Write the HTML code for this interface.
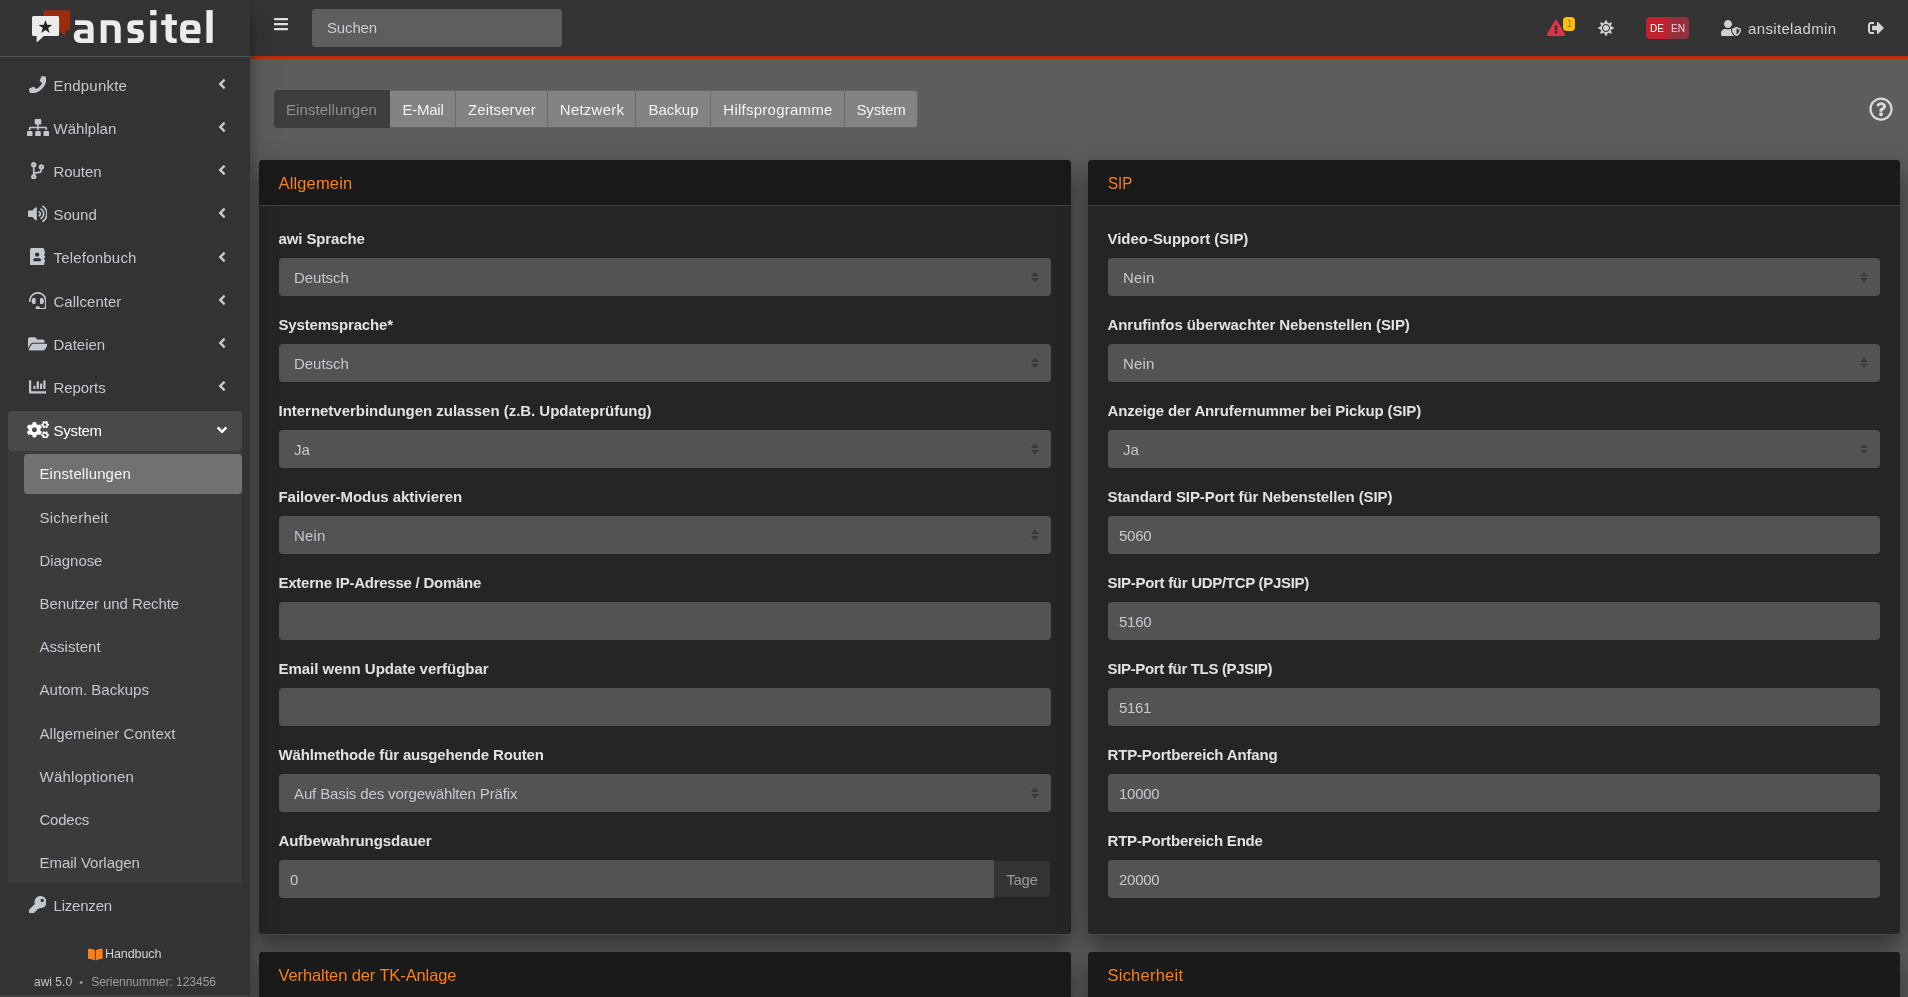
<!DOCTYPE html>
<html lang="de"><head><meta charset="utf-8"><title>ansitel awi - Einstellungen</title>
<style>
*{box-sizing:border-box;margin:0;padding:0}
html,body{width:1908px;height:997px;overflow:hidden}
body{position:relative;background:#5d5d5d;font-family:"Liberation Sans",sans-serif;font-size:15px;line-height:25px;color:#fff;-webkit-font-smoothing:antialiased}
.tx{white-space:nowrap;display:inline-block}
svg.ic{display:block;fill:currentColor}
#sb,#hd,#ct{will-change:transform}

/* ---------- sidebar ---------- */
#sb{position:absolute;left:0;top:0;width:250px;height:997px;background:#333;z-index:30;box-shadow:0 14px 28px rgba(0,0,0,.25),0 10px 10px rgba(0,0,0,.22)}
.brand{position:absolute;left:0;top:0;width:250px;height:57px;border-bottom:1px solid #4b545c}
.logo{position:absolute;left:0;top:0}
.nl{position:absolute;left:8px;width:234px;height:40px;border-radius:4px;color:#c2c7d0}
.nl.act{background:#494949;color:#fff}
.ni{position:absolute;left:16.8px;width:25.6px;height:17.6px;display:flex;justify-content:center}
.nt{position:absolute;left:45.5px;top:8px}
.ang{position:absolute;right:16px;top:11.200px;width:8px;height:16px}
.ang.down{transform:rotate(-90deg)}
.tv{position:absolute;left:8px;width:234px;background:#3b3b3b}
.sl{position:absolute;left:24px;width:218px;height:40px;border-radius:4px;color:#c2c7d0}
.sl.act{background:#717171;color:#f4f4f4}
.st{position:absolute;left:15.500px;top:8px}
.hb{position:absolute;left:0;top:942px;width:250px;height:25px;color:#d0d0d0;font-size:12.600px}
.hb svg{position:absolute;left:88.300px;top:5.700px}
.hbt{position:absolute;left:105px;top:0}
.ver{position:absolute;left:0;top:970px;width:250px;height:24px;font-size:12px}
.v1{position:absolute;left:34px;top:0;color:#c4c4c4}
.dot{position:absolute;left:79.300px;top:0;color:#9a9a9a;font-size:11px}
.v2{position:absolute;left:91.200px;top:0;color:#9c9c9c}

/* ---------- header ---------- */
#hd{position:absolute;left:250px;top:0;width:1658px;height:59px;background:#343434;border-bottom:3px solid #b0320c;z-index:20;color:#d2d2d2}
#hd>div{position:absolute}
.burger{left:24px;top:16px;color:#dedede}
.search{left:62px;top:9px;width:250px;height:38px;background:#5e5e5e;border-radius:4px;color:#c9cdd3;padding:6px 0 0 15px}
.warn{left:1296.500px;top:20px}
.badge1{left:1313px;top:17px;width:12px;height:14px;border-radius:4px;background:#ffc107;color:#1f2d3d;font-size:9px;line-height:14px;text-align:center}
.sun{left:1348px;top:20px;color:#d0d0d0}
.lang{left:1396px;top:17px;width:43px;height:22px;border-radius:4px;overflow:hidden;font-size:11.500px;line-height:22px}
.lang .de{position:absolute;left:0;top:0;width:22px;height:22px;background:#c2202f;color:#fff;text-align:center}
.lang .en{position:absolute;left:22px;top:0;width:21px;height:22px;background:#96303e;color:#e9cfd3;text-align:center;padding-right:2px}
.user{left:1470.900px;top:20px;color:#d0d0d0}
.uname{left:1498px;top:16px;color:#d2d2d2}
.logout{left:1617.700px;top:20px;color:#d6d6d6}

/* ---------- content ---------- */
#ct{position:absolute;left:0;top:0;width:1908px;height:997px;z-index:1}
#tabs{position:absolute;left:274px;top:90px;width:644px;height:38px}
.tab{position:absolute;top:0;height:38px;background:#838383;border:solid #646464;border-width:1px 0;border-right:1px solid #6b6b6b;color:#f3f3f3;text-align:center;padding-top:6px;padding-left:1px}
.tab.on{background:#3e3e3e;border-color:#3e3e3e;color:#8f8f8f;padding-left:0}
.tab.first{border-radius:4px 0 0 4px}
.tab.last{border-radius:0 4px 4px 0;border-right-color:#646464;padding-left:0}
.help{position:absolute;left:1868.800px;top:97.200px;color:#dbdbdb}

.card{position:absolute;width:812px;background:#252525;border-radius:4px;box-shadow:0 10px 24px rgba(0,0,0,.5)}
.card.r1{border-bottom:1px solid #4a4a4a}
.ch{height:46px;background:#1a1a1a;border-bottom:1px solid #39414a;border-radius:4px 4px 0 0;position:relative}
.ct{position:absolute;left:19.500px;top:10.500px;font-size:16.500px;color:#f9801a}
.cb{padding:20px}
.fg{height:70px;margin-bottom:16px}
.lb{height:24px;margin-bottom:8px;font-weight:700;color:#e2e2e2;padding-top:0}
.lb .tx{position:relative;left:-0.500px}
.inp{position:relative;height:38px;background:#535353;border-radius:4px;color:#c4c8d0;padding-top:7px}
.inp.sel{padding-left:15px}
.inp.txt{padding-left:11px}
.arr{position:absolute;right:12.500px;top:14px}
.ig{display:flex}
.inp.grp{width:715px;border-radius:4px 0 0 4px}
.addon{width:56px;height:36px;margin-top:1px;background:#343434;border-radius:0 4px 4px 0;color:#9a9a9a;text-align:center;padding-top:6px}

.sbend{position:absolute;left:0;top:995px;width:250px;height:2px;background:#404040}

</style></head>
<body>
<div id="sb">
<div class="brand"><svg class="logo" width="250" height="56" viewBox="0 0 250 56">
<path d="M44.600 10.200H68.800Q70.100 10.200 70.100 11.500V28.800Q70.100 30.100 68.800 30.100H65.600V35.300L64.900 35.900 59.100 30.100H44.600Q43.300 30.100 43.300 28.800V11.500Q43.300 10.200 44.600 10.200z" fill="#9c2d0c"/>
<path d="M33.500 15.900H57.600Q59.100 15.900 59.100 17.400V34.600Q59.100 36.100 57.600 36.100H43.900L37.400 42.100 36.600 41.700V36.100H33.500Q32 36.100 32 34.600V17.400Q32 15.900 33.500 15.900z" fill="#ebebeb"/>
<path d="M45.45 19.90L47.10 24.83L52.30 24.88L48.11 27.97L49.68 32.92L45.45 29.90L41.22 32.92L42.79 27.97L38.60 24.88L43.80 24.83z" fill="#232323"/>
<g fill="#ececec" fill-rule="evenodd">
<path d="M75.1 20.3h11q7.500 0 7.500 7.500v15.100h-13.300q-6.500 0-6.500-6.500v-.4q0-6.500 6.500-6.500h7.400v-1.700q0-2.800-2.800-2.800h-9.800zM87.700 33.600h-5.300q-2.600 0-2.600 2.400t2.600 2.400h5.300z"/>
<path d="M100.700 20.300h12.500q7.500 0 7.500 7.500v15.100h-5.900v-14.600q0-3.100-3.100-3.100h-5.100v17.700h-5.900z"/>
<path d="M143.100 20.300v4.700h-8q-1.900 0-1.900 1.900 0 1.700 1.900 1.900l4 .5q4.800.6 4.800 6.200v1.200q0 6.200-6.200 6.200h-9.900v-4.700h8.200q1.900 0 1.900-1.900v-.3q0-1.600-1.900-1.800l-4-.5q-4.700-.6-4.700-6.200v-1q0-6.200 6.200-6.200z"/>
<path d="M150.200 10.100h6.300v5.100h-6.300zM150.200 20.300h6.300v22.600h-6.300z"/>
<path d="M165.500 14.300h6.300v6h5.100v4.700h-5.100v10.500q0 2.900 2.900 2.900h2v4.500h-4.200q-7 0-7-7v-10.900h-4.300v-4.700h4.300z"/>
<path d="M187.600 20.300h5.400q7.500 0 7.500 7.500v6.300h-14.300v1.700q0 2.400 2.600 2.400h10.700v4.700h-12.400q-7 0-7-7v-8.100q0-7.500 7.500-7.500zM186.200 29.700h8.200v-2q0-2.700-2.700-2.700h-2.800q-2.700 0-2.700 2.700z"/>
<path d="M206.400 10.100h6.300v32.800h-6.300z"/>
</g>
</svg></div>
<div class="nl" style="top:65px"><span class="ni" style="top:10.6px"><svg class="ic" viewBox="0 0 512 512" width="17.60" height="17.60" style=""><path d="M493.4 24.6l-104-24c-11.3-2.600-22.900 3.300-27.500 13.900l-48 112c-4.200 9.800-1.400 21.300 6.900 28l60.600 49.600c-36 76.700-98.900 140.500-177.200 177.200l-49.600-60.600c-6.800-8.300-18.200-11.100-28-6.900l-112 48C3.900 366.500-2 378.100.6 389.400l24 104C27.100 504.200 36.700 512 48 512c256.100 0 464-207.500 464-464 0-11.200-7.700-20.900-18.600-23.400z"/></svg></span><span id="t1" class="tx nt" style="letter-spacing:0.202px;top:8px;">Endpunkte</span><span class="ang" style="top:11px"><svg class="ic" viewBox="0 0 256 512" width="8.00" height="16.00" style=""><path d="M31.700 239l136-136c9.400-9.400 24.600-9.400 33.900 0l22.600 22.600c9.400 9.400 9.400 24.600 0 33.900L127.900 256l96.400 96.400c9.400 9.400 9.400 24.600 0 33.900L201.700 409c-9.400 9.400-24.600 9.400-33.900 0l-136-136c-9.500-9.400-9.500-24.600-.1-34z"/></svg></span></div>
<div class="nl" style="top:108px"><span class="ni" style="top:10.6px"><svg class="ic" viewBox="0 0 640 512" width="22.00" height="17.60" style=""><path d="M128 352H32c-17.670 0-32 14.330-32 32v96c0 17.670 14.330 32 32 32h96c17.670 0 32-14.330 32-32v-96c0-17.670-14.330-32-32-32zm-24-80h192v48h48v-48h192v48h48v-57.590c0-21.170-17.230-38.410-38.410-38.410H344v-64h40c17.670 0 32-14.330 32-32V32c0-17.670-14.330-32-32-32H256c-17.670 0-32 14.330-32 32v96c0 17.670 14.330 32 32 32h40v64H94.410C73.230 224 56 241.230 56 262.410V320h48v-48zm264 80h-96c-17.670 0-32 14.330-32 32v96c0 17.670 14.330 32 32 32h96c17.670 0 32-14.330 32-32v-96c0-17.670-14.330-32-32-32zm240 0h-96c-17.670 0-32 14.330-32 32v96c0 17.670 14.330 32 32 32h96c17.670 0 32-14.330 32-32v-96c0-17.670-14.330-32-32-32z"/></svg></span><span id="t2" class="tx nt" style="letter-spacing:0.029px;top:8px;">Wählplan</span><span class="ang" style="top:11px"><svg class="ic" viewBox="0 0 256 512" width="8.00" height="16.00" style=""><path d="M31.700 239l136-136c9.400-9.400 24.600-9.400 33.900 0l22.600 22.600c9.400 9.400 9.400 24.600 0 33.900L127.900 256l96.400 96.400c9.400 9.400 9.400 24.600 0 33.900L201.700 409c-9.400 9.400-24.600 9.400-33.900 0l-136-136c-9.500-9.400-9.500-24.600-.1-34z"/></svg></span></div>
<div class="nl" style="top:151px"><span class="ni" style="top:10.6px"><svg class="ic" viewBox="0 0 384 512" width="13.20" height="17.60" style=""><path d="M384 144c0-44.200-35.800-80-80-80s-80 35.800-80 80c0 36.400 24.300 67.100 57.500 76.800-.6 16.100-4.200 28.500-11 36.900-15.400 19.200-49.300 22.400-85.200 25.700-28.200 2.600-57.400 5.400-81.300 16.900v-144c32.500-10.200 56-40.500 56-76.300 0-44.200-35.800-80-80-80S0 35.800 0 80c0 35.800 23.500 66.100 56 76.300v199.300C23.500 365.900 0 396.200 0 432c0 44.200 35.800 80 80 80s80-35.800 80-80c0-34-21.200-63.100-51.200-74.600 3.100-5.200 7.800-9.800 14.900-13.400 16.200-8.200 40.400-10.400 66.100-12.800 42.200-3.900 90-8.400 118.200-43.400 14-17.400 21.100-39.800 21.600-67.900 31.600-10.800 54.400-40.700 54.400-75.900zM80 64c8.800 0 16 7.200 16 16s-7.200 16-16 16-16-7.200-16-16 7.200-16 16-16zm0 384c-8.800 0-16-7.200-16-16s7.200-16 16-16 16 7.200 16 16-7.200 16-16 16zm224-320c8.800 0 16 7.200 16 16s-7.200 16-16 16-16-7.200-16-16 7.200-16 16-16z"/></svg></span><span id="t3" class="tx nt" style="letter-spacing:-0.065px;top:8px;">Routen</span><span class="ang" style="top:11px"><svg class="ic" viewBox="0 0 256 512" width="8.00" height="16.00" style=""><path d="M31.700 239l136-136c9.400-9.400 24.600-9.400 33.900 0l22.600 22.600c9.400 9.400 9.400 24.600 0 33.900L127.900 256l96.400 96.400c9.400 9.400 9.400 24.600 0 33.900L201.700 409c-9.400 9.400-24.600 9.400-33.900 0l-136-136c-9.500-9.400-9.500-24.600-.1-34z"/></svg></span></div>
<div class="nl" style="top:195px"><span class="ni" style="top:9.6px"><svg class="ic" viewBox="0 0 576 512" width="19.80" height="17.60" style=""><path d="M215.03 71.05L126.060 160H24c-13.260 0-24 10.740-24 24v144c0 13.250 10.740 24 24 24h102.060l88.970 88.950c15.030 15.030 40.970 4.470 40.970-16.970V88.020c0-21.460-25.960-31.980-40.970-16.970zm233.320-51.080c-11.170-7.330-26.180-4.240-33.510 6.950-7.340 11.170-4.220 26.180 6.950 33.510 66.270 43.490 105.820 116.600 105.820 195.580 0 78.980-39.550 152.090-105.820 195.580-11.170 7.320-14.290 22.340-6.950 33.500 7.040 10.710 21.930 14.560 33.510 6.950C528.270 439.580 576 351.330 576 256S528.270 72.430 448.350 19.970zM480 256c0-63.530-32.060-121.940-85.770-156.240-11.190-7.140-26.030-3.820-33.120 7.460s-3.780 26.210 7.410 33.360C408.270 165.970 432 209.110 432 256s-23.730 90.030-63.480 115.420c-11.190 7.140-14.500 22.070-7.410 33.360 6.510 10.360 21.120 15.140 33.120 7.460C447.940 377.940 480 319.540 480 256zm-141.770-76.870c-11.580-6.330-26.190-2.160-32.610 9.450-6.390 11.610-2.160 26.200 9.450 32.610C327.980 228.280 336 241.630 336 256c0 14.380-8.020 27.720-20.920 34.810-11.610 6.410-15.840 21-9.450 32.610 6.430 11.660 21.050 15.800 32.610 9.450 28.230-15.550 45.770-45 45.770-76.880s-17.540-61.320-45.780-76.860z"/></svg></span><span id="t4" class="tx nt" style="letter-spacing:-0.031px;top:7px;">Sound</span><span class="ang" style="top:10px"><svg class="ic" viewBox="0 0 256 512" width="8.00" height="16.00" style=""><path d="M31.700 239l136-136c9.400-9.400 24.600-9.400 33.900 0l22.600 22.600c9.400 9.400 9.400 24.600 0 33.900L127.900 256l96.400 96.400c9.400 9.400 9.400 24.600 0 33.900L201.700 409c-9.400 9.400-24.600 9.400-33.900 0l-136-136c-9.500-9.400-9.500-24.600-.1-34z"/></svg></span></div>
<div class="nl" style="top:238px"><span class="ni" style="top:9.6px"><svg class="ic" viewBox="0 0 448 512" width="15.40" height="17.60" style=""><path d="M436 160c6.600 0 12-5.400 12-12v-40c0-6.600-5.400-12-12-12h-20V48c0-26.500-21.500-48-48-48H48C21.500 0 0 21.500 0 48v416c0 26.500 21.500 48 48 48h320c26.500 0 48-21.500 48-48v-48h20c6.600 0 12-5.400 12-12v-40c0-6.600-5.400-12-12-12h-20v-64h20c6.600 0 12-5.400 12-12v-40c0-6.600-5.400-12-12-12h-20v-64h20zm-228-32c35.300 0 64 28.700 64 64s-28.700 64-64 64-64-28.700-64-64 28.700-64 64-64zm112 236.800c0 10.600-10 19.200-22.400 19.200H118.400C106 384 96 375.400 96 364.800v-19.200c0-31.800 30.100-57.600 67.200-57.600h5c12.300 5.100 25.700 8 39.800 8s27.600-2.900 39.800-8h5c37.100 0 67.200 25.800 67.200 57.600v19.200z"/></svg></span><span id="t5" class="tx nt" style="letter-spacing:0.204px;top:7px;">Telefonbuch</span><span class="ang" style="top:11px"><svg class="ic" viewBox="0 0 256 512" width="8.00" height="16.00" style=""><path d="M31.700 239l136-136c9.400-9.400 24.600-9.400 33.900 0l22.600 22.600c9.400 9.400 9.400 24.600 0 33.900L127.900 256l96.400 96.400c9.400 9.400 9.400 24.600 0 33.900L201.700 409c-9.400 9.400-24.600 9.400-33.900 0l-136-136c-9.500-9.400-9.500-24.600-.1-34z"/></svg></span></div>
<div class="nl" style="top:281px"><span class="ni" style="top:10.6px"><svg class="ic" viewBox="0 0 512 512" width="17.60" height="17.60" style=""><path d="M192 208c0-17.670-14.330-32-32-32h-16c-35.350 0-64 28.650-64 64v48c0 35.350 28.650 64 64 64h16c17.670 0 32-14.330 32-32V208zm176 144c35.350 0 64-28.650 64-64v-48c0-35.350-28.650-64-64-64h-16c-17.670 0-32 14.330-32 32v112c0 17.670 14.330 32 32 32h16zM256 0C113.180 0 4.580 118.830 0 256v16c0 8.840 7.160 16 16 16h16c8.840 0 16-7.160 16-16v-16c0-114.690 93.310-208 208-208s208 93.310 208 208h-.12c.08 2.430.12 165.720.12 165.720 0 23.350-18.930 42.280-42.280 42.280H320c0-26.510-21.490-48-48-48h-32c-26.510 0-48 21.490-48 48s21.490 48 48 48h181.720c49.860 0 90.280-40.420 90.280-90.280V256C507.420 118.830 398.820 0 256 0z"/></svg></span><span id="t6" class="tx nt" style="letter-spacing:0.035px;top:8px;">Callcenter</span><span class="ang" style="top:11px"><svg class="ic" viewBox="0 0 256 512" width="8.00" height="16.00" style=""><path d="M31.700 239l136-136c9.400-9.400 24.600-9.400 33.900 0l22.600 22.600c9.400 9.400 9.400 24.600 0 33.900L127.900 256l96.400 96.400c9.400 9.400 9.400 24.600 0 33.900L201.700 409c-9.400 9.400-24.600 9.400-33.900 0l-136-136c-9.500-9.400-9.500-24.600-.1-34z"/></svg></span></div>
<div class="nl" style="top:324px"><span class="ni" style="top:10.6px"><svg class="ic" viewBox="0 0 576 512" width="19.80" height="17.60" style=""><path d="M572.694 292.093L500.270 416.248A63.997 63.997 0 0 1 444.989 448H45.025c-18.523 0-30.064-20.093-20.731-36.093l72.424-124.155A64 64 0 0 1 152 256h399.964c18.523 0 30.064 20.093 20.730 36.093zM152 224h328v-48c0-26.510-21.490-48-48-48H272l-64-64H48C21.490 64 0 85.490 0 112v278.046l69.077-118.418C86.214 242.250 117.989 224 152 224z"/></svg></span><span id="t7" class="tx nt" style="letter-spacing:-0.009px;top:8px;">Dateien</span><span class="ang" style="top:11px"><svg class="ic" viewBox="0 0 256 512" width="8.00" height="16.00" style=""><path d="M31.700 239l136-136c9.400-9.400 24.600-9.400 33.900 0l22.600 22.600c9.400 9.400 9.400 24.600 0 33.900L127.900 256l96.400 96.400c9.400 9.400 9.400 24.600 0 33.900L201.700 409c-9.400 9.400-24.600 9.400-33.900 0l-136-136c-9.500-9.400-9.500-24.600-.1-34z"/></svg></span></div>
<div class="nl" style="top:367px"><span class="ni" style="top:10.6px"><svg class="ic" viewBox="0 0 512 512" width="17.60" height="17.60" style=""><path d="M332.800 320h38.400c6.400 0 12.800-6.400 12.800-12.800V172.800c0-6.400-6.400-12.800-12.800-12.800h-38.400c-6.400 0-12.800 6.400-12.800 12.800v134.400c0 6.400 6.400 12.800 12.800 12.800zm96 0h38.400c6.400 0 12.800-6.400 12.800-12.800V76.800c0-6.400-6.400-12.800-12.800-12.800h-38.400c-6.400 0-12.800 6.400-12.800 12.800v230.400c0 6.400 6.400 12.800 12.800 12.800zm-288 0h38.400c6.400 0 12.800-6.400 12.800-12.800v-70.400c0-6.400-6.400-12.800-12.800-12.800h-38.400c-6.400 0-12.800 6.400-12.800 12.800v70.400c0 6.400 6.400 12.800 12.800 12.800zm96 0h38.400c6.400 0 12.800-6.400 12.800-12.800V108.800c0-6.400-6.400-12.800-12.800-12.800h-38.400c-6.400 0-12.800 6.400-12.800 12.800v198.400c0 6.400 6.400 12.800 12.800 12.800zM496 384H64V80c0-8.840-7.160-16-16-16H16C7.160 64 0 71.160 0 80v336c0 17.670 14.330 32 32 32h464c8.840 0 16-7.160 16-16v-32c0-8.840-7.160-16-16-16z"/></svg></span><span id="t8" class="tx nt" style="letter-spacing:-0.064px;top:8px;">Reports</span><span class="ang" style="top:11px"><svg class="ic" viewBox="0 0 256 512" width="8.00" height="16.00" style=""><path d="M31.700 239l136-136c9.400-9.400 24.600-9.400 33.900 0l22.600 22.600c9.400 9.400 9.400 24.600 0 33.900L127.900 256l96.400 96.400c9.400 9.400 9.400 24.600 0 33.900L201.700 409c-9.400 9.400-24.600 9.400-33.900 0l-136-136c-9.500-9.400-9.500-24.600-.1-34z"/></svg></span></div>
<div class="nl act" style="top:411px"><span class="ni" style="top:9.6px"><svg class="ic" viewBox="0 0 640 512" width="22.00" height="17.60" style=""><path d="M512.100 191l-8.200 14.300c-3 5.300-9.400 7.500-15.100 5.400-11.800-4.400-22.600-10.700-32.100-18.600-4.600-3.800-5.800-10.500-2.800-15.700l8.200-14.300c-6.900-8-12.300-17.300-15.900-27.400h-16.500c-6 0-11.200-4.300-12.200-10.300-2-12-2.100-24.600 0-37.100 1-6 6.200-10.400 12.200-10.400h16.500c3.600-10.100 9-19.400 15.900-27.400l-8.200-14.300c-3-5.200-1.900-11.900 2.800-15.700 9.500-7.900 20.400-14.200 32.100-18.600 5.700-2.100 12.100.1 15.100 5.400l8.200 14.300c10.500-1.900 21.200-1.900 31.700 0L552 6.300c3-5.300 9.400-7.500 15.100-5.400 11.800 4.400 22.600 10.700 32.100 18.600 4.600 3.800 5.800 10.500 2.800 15.700l-8.200 14.300c6.900 8 12.300 17.300 15.900 27.400h16.500c6 0 11.200 4.300 12.200 10.300 2 12 2.100 24.600 0 37.100-1 6-6.200 10.400-12.200 10.400h-16.500c-3.600 10.100-9 19.400-15.900 27.400l8.200 14.300c3 5.200 1.900 11.900-2.800 15.700-9.500 7.900-20.400 14.200-32.100 18.600-5.700 2.100-12.100-.1-15.100-5.400l-8.200-14.300c-10.400 1.900-21.200 1.900-31.700 0zm-10.500-58.800c38.500 50.100 95.700-7.100 45.600-45.600-38.500-50.200-95.700 7.100-45.600 45.600zM386.300 286.100l33.700 16.800c10.100 5.800 14.500 18.100 10.500 29.100-8.900 24.200-26.400 46.400-42.600 65.800-7.400 8.900-20.200 11.100-30.300 5.300l-29.100-16.800c-16 13.700-34.600 24.600-54.900 31.700v33.600c0 11.600-8.300 21.600-19.700 23.600-24.600 4.200-50.400 4.400-75.900 0-11.500-2-20-11.900-20-23.600V418c-20.300-7.200-38.900-18-54.900-31.700L74 403c-10 5.800-22.900 3.600-30.300-5.300-16.200-19.400-33.300-41.600-42.200-65.700-4-10.900.4-23.200 10.500-29.100l33.300-16.800c-3.900-20.900-3.900-42.400 0-63.400L12 205.800c-10.100-5.800-14.600-18.100-10.500-29 8.900-24.200 26-46.400 42.200-65.800 7.400-8.900 20.200-11.100 30.300-5.300l29.100 16.800c16-13.700 34.600-24.600 54.900-31.700V57.100c0-11.500 8.200-21.500 19.600-23.500 24.600-4.200 50.500-4.400 76-.1 11.500 2 20 11.900 20 23.600v33.600c20.300 7.200 38.900 18 54.900 31.700l29.100-16.800c10-5.800 22.900-3.600 30.300 5.300 16.200 19.400 33.200 41.600 42.100 65.800 4 10.900.1 23.200-10 29.100l-33.700 16.800c3.900 21 3.900 42.500 0 63.500zm-117.600 21.100c59.200-77-28.700-164.900-105.700-105.700-59.200 77 28.700 164.900 105.700 105.700zm243.400 182.700l-8.200 14.300c-3 5.300-9.400 7.500-15.100 5.400-11.800-4.400-22.600-10.700-32.100-18.600-4.600-3.800-5.800-10.500-2.800-15.700l8.200-14.300c-6.900-8-12.300-17.300-15.900-27.400h-16.500c-6 0-11.200-4.300-12.200-10.300-2-12-2.100-24.600 0-37.100 1-6 6.200-10.400 12.200-10.400h16.500c3.600-10.100 9-19.400 15.900-27.400l-8.200-14.300c-3-5.200-1.900-11.900 2.800-15.700 9.500-7.900 20.400-14.200 32.100-18.600 5.700-2.100 12.100.1 15.100 5.400l8.200 14.300c10.500-1.900 21.200-1.900 31.700 0l8.200-14.300c3-5.300 9.400-7.500 15.100-5.400 11.800 4.400 22.600 10.700 32.100 18.600 4.600 3.800 5.800 10.500 2.800 15.700l-8.200 14.300c6.900 8 12.300 17.300 15.900 27.400h16.500c6 0 11.200 4.300 12.200 10.300 2 12 2.100 24.600 0 37.100-1 6-6.200 10.400-12.200 10.400h-16.500c-3.600 10.100-9 19.400-15.900 27.400l8.200 14.300c3 5.200 1.900 11.900-2.800 15.700-9.500 7.900-20.400 14.200-32.100 18.600-5.700 2.100-12.100-.1-15.100-5.400l-8.200-14.300c-10.400 1.900-21.200 1.900-31.700 0zM501.600 431c38.500 50.100 95.700-7.100 45.600-45.600-38.500-50.200-95.700 7.100-45.600 45.600z"/></svg></span><span id="t9" class="tx nt" style="letter-spacing:-0.293px;top:7px;">System</span><span class="ang down" style="top:11px"><svg class="ic" viewBox="0 0 256 512" width="8.00" height="16.00" style=""><path d="M31.700 239l136-136c9.400-9.400 24.600-9.400 33.900 0l22.600 22.600c9.400 9.400 9.400 24.600 0 33.900L127.900 256l96.400 96.400c9.400 9.400 9.400 24.600 0 33.900L201.700 409c-9.400 9.400-24.600 9.400-33.900 0l-136-136c-9.500-9.400-9.500-24.600-.1-34z"/></svg></span></div>
<div class="tv" style="top:451px;height:432px"></div>
<div class="sl act" style="top:454px"><span id="t10" class="tx st" style="letter-spacing:0.106px;top:7px;">Einstellungen</span></div>
<div class="sl" style="top:497px"><span id="t11" class="tx st" style="letter-spacing:0.227px;top:8px;">Sicherheit</span></div>
<div class="sl" style="top:540px"><span id="t12" class="tx st" style="letter-spacing:-0.063px;top:8px;">Diagnose</span></div>
<div class="sl" style="top:583px"><span id="t13" class="tx st" style="letter-spacing:-0.072px;top:8px;">Benutzer und Rechte</span></div>
<div class="sl" style="top:627px"><span id="t14" class="tx st" style="letter-spacing:0.036px;top:7px;">Assistent</span></div>
<div class="sl" style="top:670px"><span id="t15" class="tx st" style="letter-spacing:0.018px;top:7px;">Autom. Backups</span></div>
<div class="sl" style="top:713px"><span id="t16" class="tx st" style="letter-spacing:0.054px;top:8px;">Allgemeiner Context</span></div>
<div class="sl" style="top:756px"><span id="t17" class="tx st" style="letter-spacing:0.238px;top:8px;">Wähloptionen</span></div>
<div class="sl" style="top:799px"><span id="t18" class="tx st" style="letter-spacing:-0.242px;top:8px;">Codecs</span></div>
<div class="sl" style="top:843px"><span id="t19" class="tx st" style="letter-spacing:-0.035px;top:7px;">Email Vorlagen</span></div>
<div class="nl" style="top:886px"><span class="ni" style="top:9.6px"><svg class="ic" viewBox="0 0 512 512" width="17.60" height="17.60" style=""><path d="M512 176.001C512 273.203 433.202 352 336 352c-11.220 0-22.190-1.062-32.827-3.069l-24.012 27.014A23.999 23.999 0 0 1 261.223 384H224v40c0 13.255-10.745 24-24 24h-40v40c0 13.255-10.745 24-24 24H24c-13.255 0-24-10.745-24-24v-78.059c0-6.365 2.529-12.470 7.029-16.971l161.802-161.802C163.108 213.814 160 195.271 160 176 160 78.798 238.797.001 335.999 0 433.488-.001 512 78.511 512 176.001zM336 128c0 26.510 21.490 48 48 48s48-21.490 48-48-21.490-48-48-48-48 21.490-48 48z"/></svg></span><span id="t20" class="tx nt" style="letter-spacing:-0.200px;top:7px;">Lizenzen</span></div>
<div class="hb"><svg class="ic" viewBox="0 0 576 512" width="14.62" height="13.00" style="fill:#fd7e14;"><path d="M542.220 32.050c-54.800 3.110-163.720 14.430-230.960 55.590-4.640 2.840-7.270 7.890-7.270 13.170v363.870c0 11.550 12.630 18.850 23.280 13.490 69.180-34.820 169.230-44.320 218.700-46.920 16.890-.890 30.020-14.430 30.020-30.660V62.750c.010-17.710-15.350-31.740-33.770-30.700zM264.730 87.640C197.500 46.480 88.580 35.170 33.780 32.050 15.360 31.010 0 45.040 0 62.750V400.600c0 16.240 13.130 29.780 30.020 30.660 49.490 2.600 149.590 12.110 218.770 46.950 10.620 5.350 23.210-1.940 23.210-13.460V100.630c0-5.290-2.620-10.140-7.270-12.990z"/></svg><span id="t21" class="tx hbt" style="letter-spacing:-0.127px;">Handbuch</span></div>
<div class="ver"><span id="t22" class="tx v1" style="letter-spacing:0.008px;">awi 5.0</span><span class="dot">&#8226;</span><span id="t23" class="tx v2" style="letter-spacing:-0.034px;">Seriennummer: 123456</span></div>
<div class="sbend"></div>
</div>
<div id="hd">
<div class="burger"><svg class="ic" viewBox="0 0 448 512" width="14.00" height="16.00" style=""><path d="M16 132h416c8.837 0 16-7.163 16-16V76c0-8.837-7.163-16-16-16H16C7.163 60 0 67.163 0 76v40c0 8.837 7.163 16 16 16zm0 160h416c8.837 0 16-7.163 16-16v-40c0-8.837-7.163-16-16-16H16c-8.837 0-16 7.163-16 16v40c0 8.837 7.163 16 16 16zm0 160h416c8.837 0 16-7.163 16-16v-40c0-8.837-7.163-16-16-16H16c-8.837 0-16 7.163-16 16v40c0 8.837 7.163 16 16 16z"/></svg></div>
<div class="search"><span id="t24" class="tx " style="letter-spacing:-0.145px;">Suchen</span></div>
<div class="warn"><svg class="ic" viewBox="0 0 576 512" width="18.00" height="16.00" style="fill:#dc3545;"><path d="M569.517 440.013C587.975 472.007 564.806 512 527.940 512H48.054c-36.937 0-59.999-40.055-41.577-71.987L246.423 23.985c18.467-32.009 64.720-31.951 83.154 0l239.940 416.028zM288 354c-25.405 0-46 20.595-46 46s20.595 46 46 46 46-20.595 46-46-20.595-46-46-46zm-43.673-165.346l7.418 136c.347 6.364 5.609 11.346 11.982 11.346h48.546c6.373 0 11.635-4.982 11.982-11.346l7.418-136c.375-6.874-5.098-12.654-11.982-12.654h-63.383c-6.884 0-12.356 5.780-11.981 12.654z"/></svg></div>
<div class="badge1"><svg width="12" height="14" viewBox="0 0 12 14" style="display:block"><path d="M4.900 4.100L6.700 3.300V9.500M4.400 9.500H8.200" fill="none" stroke="#3a3008" stroke-opacity=".6" stroke-width=".8"/></svg></div>
<div class="sun"><svg class="ic" viewBox="0 0 512 512" width="16.00" height="16.00" style=""><path d="M256 160c-52.900 0-96 43.100-96 96s43.100 96 96 96 96-43.100 96-96-43.100-96-96-96zm246.400 80.500l-94.700-47.300 33.500-100.400c4.500-13.600-8.400-26.500-21.900-21.900l-100.400 33.500-47.400-94.800c-6.400-12.800-24.600-12.800-31 0l-47.300 94.700L92.700 70.800c-13.600-4.500-26.500 8.400-21.900 21.900l33.500 100.400-94.700 47.400c-12.800 6.400-12.800 24.600 0 31l94.700 47.300-33.500 100.500c-4.500 13.600 8.400 26.500 21.900 21.900l100.400-33.500 47.300 94.700c6.400 12.800 24.600 12.800 31 0l47.300-94.700 100.400 33.500c13.600 4.500 26.500-8.400 21.900-21.900l-33.500-100.400 94.700-47.300c13-6.500 13-24.700.2-31.100zm-155.900 106c-49.900 49.900-131.100 49.900-181 0-49.900-49.900-49.900-131.100 0-181 49.900-49.900 131.100-49.900 181 0 49.900 49.900 49.900 131.100 0 181z"/></svg></div>
<div class="lang"><div class="de"><span id="t25" class="tx " style="transform:scaleX(0.8696);transform-origin:center center;">DE</span></div><div class="en"><span id="t26" class="tx " style="transform:scaleX(0.8830);transform-origin:center center;">EN</span></div></div>
<div class="user"><svg class="ic" viewBox="0 0 640 512" width="20.00" height="16.00" style=""><path d="M622.300 271.100l-115.200-45c-4.100-1.600-12.600-3.700-22.200 0l-115.200 45c-10.700 4.200-17.700 14-17.700 24.900 0 111.600 68.700 188.800 132.900 213.900 9.600 3.700 18 1.600 22.200 0C558.400 489.900 640 420.500 640 296c0-10.900-7-20.700-17.700-24.900zM496 462.400V273.300l95.500 37.300c-5.600 87.100-60.900 135.400-95.500 151.800zM224 256c70.700 0 128-57.300 128-128S294.700 0 224 0 96 57.300 96 128s57.300 128 128 128zm96 40c0-2.500.8-4.800 1.100-7.200-2.500-.1-4.900-.8-7.500-.8h-16.700c-22.200 10.200-46.900 16-72.900 16s-50.600-5.800-72.900-16h-16.700C60.200 288 0 348.200 0 422.400V464c0 26.500 21.500 48 48 48h352c6.800 0 13.300-1.500 19.200-4-54-42.900-99.200-116.700-99.200-212z"/></svg></div>
<div class="uname"><span id="t27" class="tx " style="letter-spacing:0.348px;">ansiteladmin</span></div>
<div class="logout"><svg class="ic" viewBox="0 0 512 512" width="16.00" height="16.00" style=""><path d="M497 273L329 441c-15 15-41 4.500-41-17v-96H152c-13.300 0-24-10.700-24-24v-96c0-13.300 10.700-24 24-24h136V88c0-21.400 25.900-32 41-17l168 168c9.300 9.400 9.300 24.600 0 34zM192 436v-40c0-6.600-5.400-12-12-12H96c-17.700 0-32-14.300-32-32V160c0-17.700 14.300-32 32-32h84c6.600 0 12-5.400 12-12V76c0-6.600-5.400-12-12-12H96c-53 0-96 43-96 96v192c0 53 43 96 96 96h84c6.600 0 12-5.400 12-12z"/></svg></div>
</div>
<div id="ct">
<div id="tabs"><div class="tab on first" style="left:0px;width:116px"><span id="t28" class="tx " style="letter-spacing:0.073px;">Einstellungen</span></div><div class="tab" style="left:116px;width:66px"><span id="t29" class="tx " style="letter-spacing:-0.213px;">E-Mail</span></div><div class="tab" style="left:182px;width:92px"><span id="t30" class="tx " style="letter-spacing:0.129px;">Zeitserver</span></div><div class="tab" style="left:274px;width:88px"><span id="t31" class="tx " style="letter-spacing:0.219px;">Netzwerk</span></div><div class="tab" style="left:362px;width:75px"><span id="t32" class="tx " style="letter-spacing:0.001px;">Backup</span></div><div class="tab" style="left:437px;width:134px"><span id="t33" class="tx " style="letter-spacing:0.245px;">Hilfsprogramme</span></div><div class="tab last" style="left:571px;width:73px"><span id="t34" class="tx " style="letter-spacing:-0.133px;">System</span></div></div><div class="help"><svg class="ic" viewBox="0 0 512 512" width="24.00" height="24.00" style=""><path d="M256 8C119.043 8 8 119.083 8 256c0 136.997 111.043 248 248 248s248-111.003 248-248C504 119.083 392.957 8 256 8zm0 448c-110.532 0-200-89.431-200-200 0-110.495 89.472-200 200-200 110.491 0 200 89.471 200 200 0 110.530-89.431 200-200 200zm107.244-255.200c0 67.052-72.421 68.084-72.421 92.863V300c0 6.627-5.373 12-12 12h-45.647c-6.627 0-12-5.373-12-12v-8.659c0-35.745 27.100-50.034 47.579-61.516 17.561-9.845 28.324-16.541 28.324-29.579 0-17.246-21.999-28.693-39.784-28.693-23.189 0-33.894 10.977-48.942 29.969-4.057 5.120-11.460 6.071-16.666 2.124l-27.824-21.098c-5.107-3.872-6.251-11.066-2.644-16.363C184.846 131.491 214.940 112 261.794 112c49.071 0 101.450 38.304 101.450 88.800zM298 368c0 23.159-18.841 42-42 42s-42-18.841-42-42 18.841-42 42-42 42 18.841 42 42z"/></svg></div>
<div class="card r1" style="left:259px;top:160px;height:775px;"><div class="ch"><span id="t50" class="tx ct" style="letter-spacing:0.152px;">Allgemein</span></div><div class="cb"><div class="fg"><div class="lb"><span id="t35" class="tx " style="letter-spacing:-0.110px;">awi Sprache</span></div><div class="inp sel"><span id="t36" class="tx " style="letter-spacing:-0.047px;">Deutsch</span><svg class="arr" width="8" height="10" viewBox="0 0 4 5"><path fill="#343a40" d="M2 0L0 2h4zm0 5L0 3h4z"/></svg></div></div><div class="fg"><div class="lb"><span id="t37" class="tx " style="letter-spacing:-0.168px;">Systemsprache*</span></div><div class="inp sel"><span id="t38" class="tx " style="letter-spacing:-0.047px;">Deutsch</span><svg class="arr" width="8" height="10" viewBox="0 0 4 5"><path fill="#343a40" d="M2 0L0 2h4zm0 5L0 3h4z"/></svg></div></div><div class="fg"><div class="lb"><span id="t39" class="tx " style="letter-spacing:-0.023px;">Internetverbindungen zulassen (z.B. Updateprüfung)</span></div><div class="inp sel"><span id="t40" class="tx " style="letter-spacing:0.106px;">Ja</span><svg class="arr" width="8" height="10" viewBox="0 0 4 5"><path fill="#343a40" d="M2 0L0 2h4zm0 5L0 3h4z"/></svg></div></div><div class="fg"><div class="lb"><span id="t41" class="tx " style="letter-spacing:-0.055px;">Failover-Modus aktivieren</span></div><div class="inp sel"><span id="t42" class="tx " style="letter-spacing:0.130px;">Nein</span><svg class="arr" width="8" height="10" viewBox="0 0 4 5"><path fill="#343a40" d="M2 0L0 2h4zm0 5L0 3h4z"/></svg></div></div><div class="fg"><div class="lb"><span id="t43" class="tx " style="letter-spacing:-0.246px;">Externe IP-Adresse / Domäne</span></div><div class="inp txt"></div></div><div class="fg"><div class="lb"><span id="t44" class="tx " style="letter-spacing:-0.032px;">Email wenn Update verfügbar</span></div><div class="inp txt"></div></div><div class="fg"><div class="lb"><span id="t45" class="tx " style="letter-spacing:-0.143px;">Wählmethode für ausgehende Routen</span></div><div class="inp sel"><span id="t46" class="tx " style="letter-spacing:-0.127px;">Auf Basis des vorgewählten Präfix</span><svg class="arr" width="8" height="10" viewBox="0 0 4 5"><path fill="#343a40" d="M2 0L0 2h4zm0 5L0 3h4z"/></svg></div></div><div class="fg"><div class="lb"><span id="t47" class="tx " style="letter-spacing:-0.061px;">Aufbewahrungsdauer</span></div><div class="ig"><div class="inp txt grp"><span id="t48" class="tx " style="">0</span></div><div class="addon"><span id="t49" class="tx " style="letter-spacing:-0.294px;">Tage</span></div></div></div></div></div><div class="card r1" style="left:1088px;top:160px;height:775px;"><div class="ch"><span id="t67" class="tx ct" style="transform:scaleX(0.9154);transform-origin:left center;">SIP</span></div><div class="cb"><div class="fg"><div class="lb"><span id="t51" class="tx " style="letter-spacing:-0.030px;">Video-Support (SIP)</span></div><div class="inp sel"><span id="t52" class="tx " style="letter-spacing:0.130px;">Nein</span><svg class="arr" width="8" height="10" viewBox="0 0 4 5"><path fill="#343a40" d="M2 0L0 2h4zm0 5L0 3h4z"/></svg></div></div><div class="fg"><div class="lb"><span id="t53" class="tx " style="letter-spacing:-0.067px;">Anrufinfos überwachter Nebenstellen (SIP)</span></div><div class="inp sel"><span id="t54" class="tx " style="letter-spacing:0.130px;">Nein</span><svg class="arr" width="8" height="10" viewBox="0 0 4 5"><path fill="#343a40" d="M2 0L0 2h4zm0 5L0 3h4z"/></svg></div></div><div class="fg"><div class="lb"><span id="t55" class="tx " style="letter-spacing:-0.143px;">Anzeige der Anrufernummer bei Pickup (SIP)</span></div><div class="inp sel"><span id="t56" class="tx " style="letter-spacing:0.106px;">Ja</span><svg class="arr" width="8" height="10" viewBox="0 0 4 5"><path fill="#343a40" d="M2 0L0 2h4zm0 5L0 3h4z"/></svg></div></div><div class="fg"><div class="lb"><span id="t57" class="tx " style="letter-spacing:-0.086px;">Standard SIP-Port für Nebenstellen (SIP)</span></div><div class="inp txt"><span id="t58" class="tx " style="letter-spacing:-0.242px;">5060</span></div></div><div class="fg"><div class="lb"><span id="t59" class="tx " style="letter-spacing:-0.297px;">SIP-Port für UDP/TCP (PJSIP)</span></div><div class="inp txt"><span id="t60" class="tx " style="letter-spacing:-0.242px;">5160</span></div></div><div class="fg"><div class="lb"><span id="t61" class="tx " style="letter-spacing:-0.329px;">SIP-Port für TLS (PJSIP)</span></div><div class="inp txt"><span id="t62" class="tx " style="letter-spacing:-0.342px;">5161</span></div></div><div class="fg"><div class="lb"><span id="t63" class="tx " style="letter-spacing:-0.170px;">RTP-Portbereich Anfang</span></div><div class="inp txt"><span id="t64" class="tx " style="letter-spacing:-0.267px;">10000</span></div></div><div class="fg"><div class="lb"><span id="t65" class="tx " style="letter-spacing:-0.198px;">RTP-Portbereich Ende</span></div><div class="inp txt"><span id="t66" class="tx " style="letter-spacing:-0.267px;">20000</span></div></div></div></div><div class="card" style="left:259px;top:952px;height:100px;"><div class="ch"><span id="t68" class="tx ct" style="letter-spacing:-0.110px;">Verhalten der TK-Anlage</span></div><div class="cb"></div></div><div class="card" style="left:1088px;top:952px;height:100px;"><div class="ch"><span id="t69" class="tx ct" style="letter-spacing:0.234px;">Sicherheit</span></div><div class="cb"></div></div>
</div>
</body></html>
